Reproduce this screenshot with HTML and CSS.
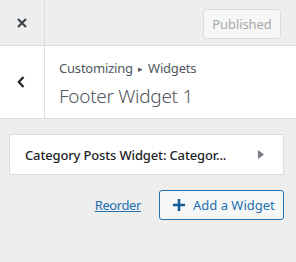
FILE: index.html
```html
<!DOCTYPE html>
<html>
<head>
<meta charset="utf-8">
<link rel="stylesheet" href="styles.css">
</head>
<body>
<div class="panel">
  <header class="topbar">
    <button class="close-btn" aria-label="Close">
      <svg width="10" height="10" viewBox="0 0 10 10"><path d="M1 1L9 9M9 1L1 9" stroke="#3c434a" stroke-width="2.2"/></svg>
    </button>
    <div class="spacer"></div>
    <button class="published">Published</button>
  </header>
  <section class="section-head">
    <button class="back-btn" aria-label="Back">
      <svg width="8" height="12" viewBox="0 0 8 12"><path d="M6.5 1L1.8 6L6.5 11" fill="none" stroke="#1d2327" stroke-width="2.2"/></svg>
    </button>
    <div class="titles">
      <div class="crumb">Customizing <span class="tri">▸</span> Widgets</div>
      <div class="title">Footer Widget 1</div>
    </div>
  </section>
  <div class="content">
    <div class="widget-card">
      <span class="widget-name">Category Posts Widget: Categor...</span>
      <svg class="arrow" width="6" height="9" viewBox="0 0 6 9"><path d="M0 0L6 4.5L0 9Z" fill="#787c82"/></svg>
    </div>
    <div class="actions">
      <a class="reorder" href="#">Reorder</a>
      <button class="add-widget">
        <svg width="12" height="12" viewBox="0 0 12 12"><path d="M6 0V12M0 6H12" stroke="#135e96" stroke-width="2.6"/></svg>
        <span>Add a Widget</span>
      </button>
    </div>
  </div>
</div>
</body>
</html>
```
FILE: styles.css
```css
* { box-sizing: border-box; }
html, body { margin: 0; padding: 0; }
body {
  background: #eeeeee;
  font-family: "Noto Sans", "Open Sans", sans-serif;
  font-size: 13px;
  color: #50575e;
  width: 296px;
  height: 262px;
  overflow: hidden;
}
button { font-family: inherit; cursor: pointer; }
.topbar {
  display: flex;
  height: 46px;
  border-bottom: 1px solid #dddddd;
  background: #eeeeee;
}
.close-btn {
  width: 45px;
  height: 45px;
  border: 0;
  border-right: 1px solid #dddddd;
  background: transparent;
  display: flex;
  align-items: center;
  justify-content: center;
  padding: 0;
}
.spacer { flex: 1; }
.published {
  margin: 9px 15px 0 0;
  width: 78px;
  height: 30px;
  border: 1px solid #dcdcde;
  background: #f6f7f7;
  color: #a7aaad;
  border-radius: 3px;
  font-size: 13px;
  letter-spacing: -0.1px;
  padding: 0;
}
.section-head {
  display: flex;
  background: #ffffff;
  height: 73px;
  border-bottom: 1px solid #dddddd;
}
.back-btn {
  width: 45px;
  border: 0;
  border-right: 1px solid #dddddd;
  background: transparent;
  display: flex;
  align-items: center;
  justify-content: center;
  padding: 0 2px 0 0;
}
.titles {
  padding: 10px 0 0 14px;
}
.crumb {
  font-size: 13px;
  color: #50575e;
  line-height: 24px;
  letter-spacing: -0.2px;
}
.tri { font-size: 9px; position: relative; top: -1px; margin: 0 2px; }
.title {
  font-size: 19px;
  font-weight: 300;
  color: #50575e;
  line-height: 28px;
  letter-spacing: -0.3px;
}
.content {
  padding: 15px 12px 0 9px;
}
.widget-card {
  display: flex;
  align-items: center;
  height: 41px;
  background: #ffffff;
  border: 1px solid #dcdcde;
  padding: 0 19px 0 15px;
}
.widget-name {
  flex: 1;
  font-size: 13px;
  font-weight: 500;
  letter-spacing: -0.15px;
  color: #1d2327;
}
.actions {
  display: flex;
  justify-content: flex-end;
  align-items: center;
  margin-top: 15px;
  gap: 18px;
}
.reorder {
  color: #2271b1;
  font-size: 13px;
  letter-spacing: -0.4px;
  text-decoration: underline;
}
.add-widget {
  display: flex;
  align-items: center;
  gap: 8px;
  width: 125px;
  height: 30px;
  padding: 0 0 0 13px;
  border: 1px solid #2271b1;
  border-radius: 3px;
  background: #f6f7f7;
  color: #2271b1;
  font-size: 13px;
}
```
